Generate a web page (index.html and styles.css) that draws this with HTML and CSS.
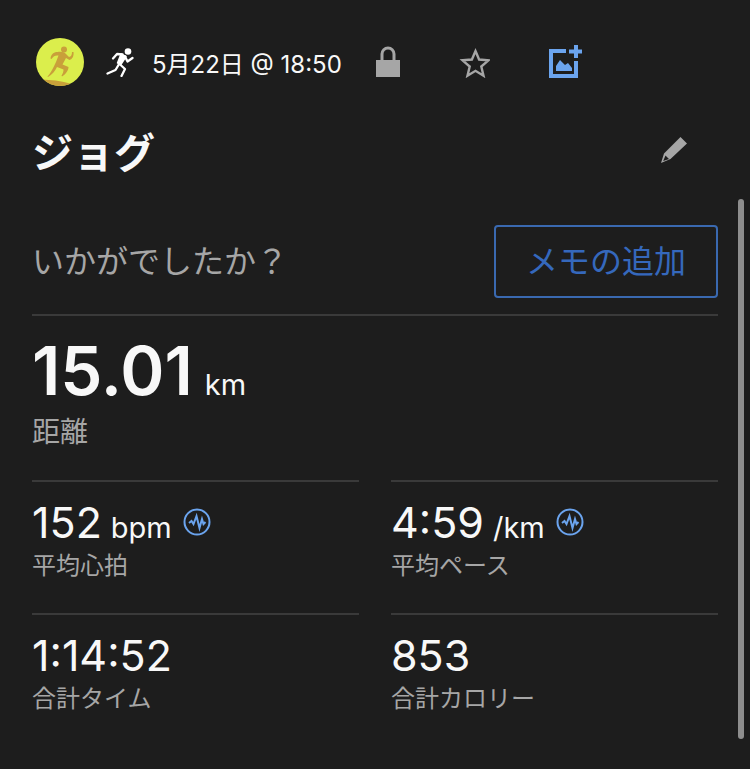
FILE: index.html
```html
<!DOCTYPE html>
<html lang="ja">
<head>
  <meta charset="UTF-8">
  <meta name="viewport" content="width=device-width, initial-scale=1">
  <title>ジョグ</title>
  <link rel="stylesheet" href="styles.css">
</head>
<body>

  <main class="activity">
    <header class="activity-header">
      <svg class="avatar" viewBox="0 0 48 48" aria-hidden="true">
        <clipPath id="avatar-clip"><circle cx="24" cy="24" r="24"/></clipPath>
        <g clip-path="url(#avatar-clip)">
          <rect width="48" height="48" fill="#dbee4c"/>
          <path d="M6 41.500c9 .500 18 1 28 4V48H6z" fill="#c9a03a"/>
          <g fill="#c9a03a">
            <circle cx="28" cy="11.500" r="3"/>
            <path d="M14.500 20.500c.500-4 3-6.500 7-6.500 4-.500 7 0 8.500 2l3 3c2-.500 3-2 3-5h1.500c.500 4-1 7-4 8l-3.500-2-3.500 6.500 6 2.500c0 3-2.500 7-6.500 9.500l-.500-1c1.500-2 2-4 2-6l-6.500-2.500c-2 4.500-5 7.500-9 10l-.500-.500c3-3 6-9 8.500-14.500l2.500-6.500c-3-.500-5 .500-7 3.500z"/>
          </g>
        </g>
      </svg>
      <svg class="sport-icon" viewBox="0 0 28 30" aria-hidden="true">
        <circle cx="22" cy="4.500" r="3.300" fill="#fff"/>
        <path d="M15 7l5 2.500-5.500 8.500-3-2z" fill="#fff" stroke="#fff" stroke-width="1.500" stroke-linejoin="round"/>
        <g fill="none" stroke="#fff" stroke-width="2.300" stroke-linecap="round" stroke-linejoin="round">
          <path d="M16.500 7.500l-5.500-.500-4 4.500"/>
          <path d="M19 9.500l2.500 5 5-3.500"/>
          <path d="M13.500 17l5.500 5-3.500 7"/>
          <path d="M12.500 18l-3 5-8 3.500"/>
        </g>
      </svg>
      <time class="date" datetime="05-22T18:50">5月22日 @ 18:50</time>
      <div class="header-actions">
        <button type="button" class="icon-button" aria-label="非公開">
          <svg width="24" height="32" viewBox="0 0 24 32">
            <path d="M6 15V8a6 6 0 0 1 12 0v7" fill="none" stroke="#a6a6a6" stroke-width="3"/>
            <rect y="14" width="24" height="17" fill="#a6a6a6"/>
          </svg>
        </button>
        <button type="button" class="icon-button" aria-label="お気に入り">
          <svg width="32" height="32" viewBox="0 0 32 32">
            <path d="M17.500 5l3.600 8.500 9.400.800-7.200 6.200 2.200 9.200-8-4.900-8 4.900 2.200-9.200-7.200-6.200 9.400-.800z" fill="none" stroke="#a6a6a6" stroke-width="2.400"/>
          </svg>
        </button>
        <button type="button" class="icon-button" aria-label="写真を追加">
          <svg width="35" height="36" viewBox="0 0 35 36">
            <path d="M18 7H3v25h25V17" fill="none" stroke="#6ba4ee" stroke-width="4"/>
            <path d="M28 1v13M21 7.500h13" stroke="#6ba4ee" stroke-width="4"/>
            <path d="M8 27v-5l4-6 5 5 3-2 4 5v3z" fill="#6ba4ee"/>
          </svg>
        </button>
      </div>
    </header>

    <div class="title-row">
      <h1>ジョグ</h1>
      <button type="button" class="icon-button" aria-label="タイトルを編集">
        <svg width="28" height="28" viewBox="0 0 28 28">
          <path fill-rule="evenodd" d="M20.500 1l6.500 6.500L10.500 23 1 27l3-9.500zM5.500 19.500L3.200 25l5.800-2z" fill="#a6a6a6"/>
        </svg>
      </button>
    </div>

    <div class="note-row">
      <p>いかがでしたか？</p>
      <button type="button" class="note-button">メモの追加</button>
    </div>

    <dl class="stats">
      <div class="stat stat-main">
        <dt>距離</dt>
        <dd>15.01 <span class="unit">km</span></dd>
      </div>
      <div class="stat">
        <dt>平均心拍</dt>
        <dd>152 <span class="unit">bpm</span>
          <svg class="pulse" viewBox="0 0 28 28" aria-hidden="true">
            <circle cx="14" cy="14" r="12.500"/>
            <path d="M6 15l2.500-2 2 3L13.500 8l3 12 2.500-9 1.500 5 2-2"/>
          </svg>
        </dd>
      </div>
      <div class="stat">
        <dt>平均ペース</dt>
        <dd>4:59 <span class="unit">/km</span>
          <svg class="pulse" viewBox="0 0 28 28" aria-hidden="true">
            <circle cx="14" cy="14" r="12.500"/>
            <path d="M6 15l2.500-2 2 3L13.500 8l3 12 2.500-9 1.500 5 2-2"/>
          </svg>
        </dd>
      </div>
      <div class="stat">
        <dt>合計タイム</dt>
        <dd>1:14:52</dd>
      </div>
      <div class="stat">
        <dt>合計カロリー</dt>
        <dd>853</dd>
      </div>
    </dl>
  </main>

  <div class="scroll-thumb"></div>

</body>
</html>
```

FILE: styles.css
```css
* {
  box-sizing: border-box;
}

body {
  margin: 0;
  background-color: #1d1d1d;
  color: #f8f8f8;
  font-family: Inter, "Noto Sans CJK JP", sans-serif;
}

button {
  font-family: inherit;
  cursor: pointer;
}

.activity {
  padding: 30px 32px;
}

.activity-header {
  display: flex;
  align-items: center;
  height: 64px;
  padding-left: 4px;
}

.avatar {
  width: 48px;
  height: 48px;
}

.sport-icon {
  width: 28px;
  height: 30px;
  margin: 0 18px 0 22px;
}

.date {
  font-size: 24px;
  white-space: nowrap;
}

.header-actions {
  display: flex;
  align-items: center;
  gap: 58px;
  margin-left: 34px;
}

.icon-button {
  display: flex;
  padding: 0;
  border: none;
  background: none;
}

.title-row {
  display: flex;
  align-items: center;
  justify-content: space-between;
  height: 64px;
  margin-top: 24px;
  padding-right: 30px;
}

h1 {
  margin: 0;
  font-size: 41px;
  font-weight: 700;
}

.note-row {
  display: flex;
  align-items: center;
  justify-content: space-between;
  margin-top: 43px;
  padding-bottom: 16px;
}

.note-row p {
  margin: 0;
  color: #a6a6a6;
  font-size: 32px;
  line-height: 45px;
}

.note-button {
  padding: 12px 30px;
  border: 2px solid #3a69b0;
  border-radius: 4px;
  background: none;
  color: #3568bc;
  font-size: 32px;
  line-height: 45px;
}

.stats {
  display: grid;
  grid-template-columns: 1fr 1fr;
  column-gap: 32px;
  margin: 0;
}

.stat {
  display: flex;
  flex-direction: column-reverse;
  justify-content: flex-end;
  padding: 16px 0 27px;
  border-top: 2px solid #3a3a3a;
}

.stat dt {
  color: #a6a6a6;
  font-size: 24px;
  line-height: 40px;
}

.stat dd {
  display: flex;
  align-items: baseline;
  gap: 9px;
  height: 48px;
  margin: 0;
  font-size: 43px;
  line-height: 48px;
}

.unit {
  font-size: 29px;
}

.pulse {
  align-self: center;
  width: 28px;
  height: 28px;
  margin-left: 2px;
  fill: none;
  stroke: #6ba4ee;
  stroke-width: 2;
}

.stat-main {
  grid-column: 1 / -1;
  padding: 19px 0 23px;
}

.stat-main dt {
  font-size: 28px;
  line-height: 50px;
}

.stat-main dd {
  gap: 12px;
  height: 72px;
  font-size: 67px;
  font-weight: 600;
  line-height: 72px;
}

.stat-main .unit {
  font-weight: 400;
}

/* overlay scroll indicator */
.scroll-thumb {
  position: fixed;
  top: 199px;
  right: 6px;
  bottom: 30px;
  width: 6px;
  border-radius: 3px;
  background-color: #8e8e8e;
}
```
